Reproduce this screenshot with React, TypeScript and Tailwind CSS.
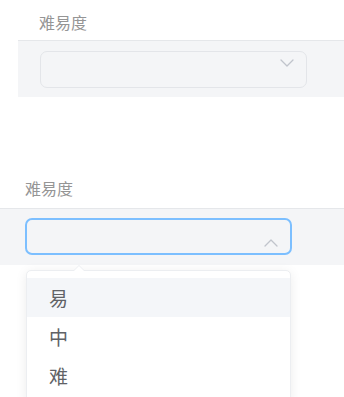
const font = { fontFamily: '"Noto Sans CJK SC", "Noto Sans", sans-serif' };

const ChevronDown = ({ className = '' }: { className?: string }) => (
  <svg className={className} width="14" height="8" viewBox="0 0 14 8" fill="none">
    <path d="M1 1l6 6 6-6" stroke="#c0c4cc" strokeWidth="1.3" strokeLinecap="round" strokeLinejoin="round" />
  </svg>
);

const ChevronUp = ({ className = '' }: { className?: string }) => (
  <svg className={className} width="14" height="8" viewBox="0 0 14 8" fill="none">
    <path d="M1 7l6-6 6 6" stroke="#c0c4cc" strokeWidth="1.3" strokeLinecap="round" strokeLinejoin="round" />
  </svg>
);

const options = ['易', '中', '难'];

export default function App() {
  return (
    <div className="w-[344px] h-[397px] overflow-hidden bg-white" style={font}>
      {/* closed select */}
      <div className="pt-[10px]">
        <div className="pl-[39px] text-[16px] leading-[24px] text-[#959595]">难易度</div>
        <div className="ml-[18px] mt-[6px] h-[57px] border-t border-[#e5e7ea] bg-[#f4f5f7] pl-[22px] pt-[10px]">
          <div className="flex h-[37px] w-[267px] items-start justify-end rounded-[7px] border border-[#e3e5e9] pr-[12px] pt-[7px]">
            <ChevronDown />
          </div>
        </div>
      </div>

      {/* open select */}
      <div className="mt-[79px]">
        <div className="pl-[25px] text-[16px] leading-[24px] text-[#959595]">难易度</div>
        <div className="mt-[8px] h-[57px] border-t border-[#e5e7ea] bg-[#f4f5f7] pl-[25px] pt-[9px]">
          <div className="flex h-[37px] w-[267px] items-end justify-end rounded-[7px] border-2 border-[#7cbfff] pb-[6px] pr-[12px]">
            <ChevronUp />
          </div>
        </div>

        <div className="relative ml-[26px] mt-[5px] w-[265px] rounded-[5px] border border-[#eceef1] bg-white py-[7px] shadow-[0_2px_12px_rgba(0,0,0,0.08)]">
          <div className="absolute left-[46px] top-[-6px] h-0 w-0 border-x-[6px] border-b-[6px] border-x-transparent border-b-[#eceef1]" />
          <div className="absolute left-[47px] top-[-5px] h-0 w-0 border-x-[5px] border-b-[5px] border-x-transparent border-b-white" />
          {options.map((o, i) => (
            <div
              key={o}
              className={`h-[39px] pl-[22px] text-[19px] leading-[39px] text-[#606266] ${i === 0 ? 'bg-[#f4f6f9]' : ''}`}
            >
              {o}
            </div>
          ))}
        </div>
      </div>
    </div>
  );
}
